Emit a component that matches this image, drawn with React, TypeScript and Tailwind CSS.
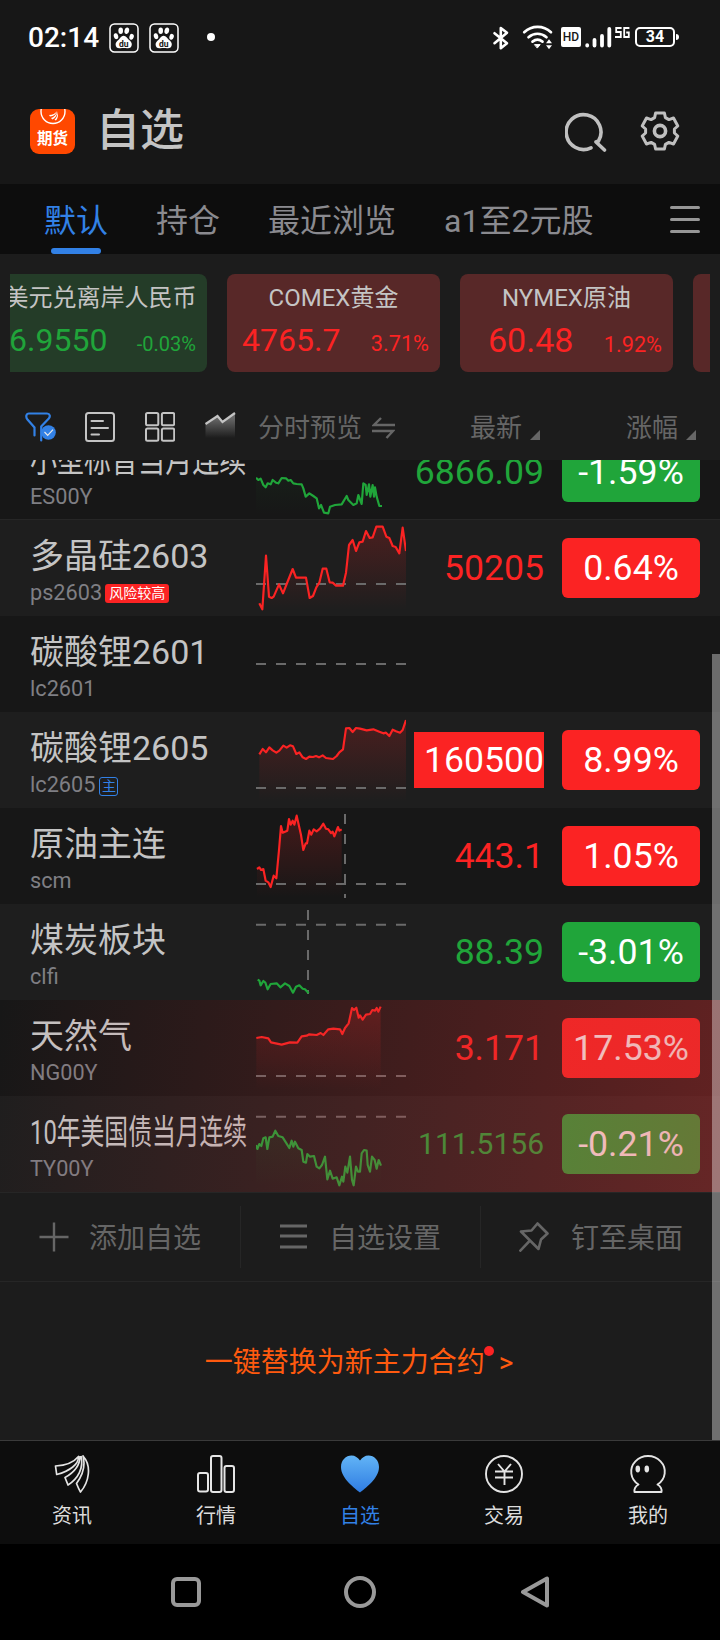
import React from 'react';

interface Quote {
    name: string;
    nameClass?: string;
    code: string;
    tag?: 'risk' | 'main';
    price?: string;
    priceClass?: string;
    change?: string;
    up?: boolean;
    flash?: boolean;
    points?: string;
    baseline: number;
    now?: number;
}

interface IndexCard {
    name: string;
    price: string;
    priceClass: string;
    change: string;
    changeClass: string;
    up: boolean;
}

const tabs = ['默认', '持仓', '最近浏览', 'a1至2元股'];

const indexCards: IndexCard[] = [
    { name: '美元兑离岸人民币', price: '6.9550', priceClass: 'pl-[15px] text-[32px]', change: '-0.03%', changeClass: 'text-[20px]', up: false },
    { name: 'COMEX黄金', price: '4765.7', priceClass: 'pl-[15px] text-[32px]', change: '3.71%', changeClass: 'text-[21.7px]', up: true },
    { name: 'NYMEX原油', price: '60.48', priceClass: 'pl-[28px] text-[34px]', change: '1.92%', changeClass: 'text-[21.7px]', up: true },
    { name: '', price: '', priceClass: '', change: '', changeClass: '', up: true },
];

// Chart points use a 450x288 grid, three units for each pixel of a row.
const quotes: Quote[] = [
    {
        name: '小型标普当月连续', nameClass: 'scale-x-[0.795]', code: 'ES00Y', price: '6866.09', change: '-1.59%', up: false, baseline: 62,
        points: '0,161 7,168 14,164 22,183 29,190 35,178 44,181 50,168 60,176 67,178 77,162 90,163 97,170 104,168 112,178 122,180 137,181 142,193 149,218 160,208 172,216 182,223 189,253 195,243 204,266 217,268 222,248 237,243 257,241 272,216 277,228 292,243 302,238 307,213 317,240 322,178 329,183 332,213 339,181 343,218 350,183 354,218 357,190 362,218 370,246 378,246',
    },
    {
        name: '多晶硅2603', code: 'ps2603', tag: 'risk', price: '50205', change: '0.64%', up: true, baseline: 192,
        points: '10,250 19,268 30,107 39,230 47,234 53,230 69,193 81,220 92,192 110,147 120,173 150,173 161,234 171,228 181,202 190,188 200,146 211,146 221,187 230,188 240,197 261,197 270,158 279,75 290,60 300,93 310,67 320,65 330,33 341,54 350,52 361,20 380,20 391,50 400,54 410,78 419,81 430,100 440,23 450,93',
    },
    { name: '碳酸锂2601', code: 'lc2601', baseline: 144 },
    {
        name: '碳酸锂2605', code: 'lc2605', tag: 'main', price: '160500', change: '8.99%', up: true, flash: true, baseline: 228,
        points: '10,127 20,111 30,121 40,106 50,115 61,122 70,116 82,101 92,107 102,100 111,103 121,126 130,121 140,136 150,141 160,134 171,135 180,132 189,136 200,130 210,138 231,141 242,132 250,121 261,112 270,49 280,48 290,60 300,48 312,50 332,55 352,52 370,59 382,64 390,62 400,72 410,53 420,58 432,62 440,54 450,24',
    },
    {
        name: '原油主连', code: 'scm', price: '443.1', change: '1.05%', up: true, baseline: 228, now: 267,
        points: '3,183 10,178 15,186 22,183 29,218 37,223 44,237 53,203 61,211 69,126 75,54 80,74 94,68 99,33 104,50 110,38 115,50 122,23 129,54 135,81 142,126 149,106 153,106 160,68 166,80 173,64 182,70 192,62 202,47 210,62 217,64 225,75 230,71 235,85 246,57 250,68 257,64',
    },
    {
        name: '煤炭板块', code: 'clfi', price: '88.39', change: '-3.01%', up: false, baseline: 62, now: 156,
        points: '5,227 10,230 14,244 22,231 28,236 35,256 44,240 62,238 73,250 87,238 100,246 111,266 120,248 130,244 140,254 147,256 158,268',
    },
    {
        name: '天然气', code: 'NG00Y', price: '3.171', change: '17.53%', up: true, baseline: 228,
        points: '1,114 17,111 37,115 45,127 77,134 102,127 124,128 137,109 152,107 160,103 182,105 194,99 202,105 217,88 232,86 252,88 259,102 267,84 278,70 288,24 294,30 301,23 308,53 312,46 320,59 330,44 342,42 349,30 357,32 362,24 367,35 374,20',
    },
    {
        name: '10年美国债当月连续', nameClass: 'scale-x-[0.7]', code: 'TY00Y', price: '111.5156', priceClass: 'text-[30px]', change: '-0.21%', up: false, baseline: 62,
        points: '0,147 4,159 10,144 16,150 22,127 29,124 34,159 40,124 50,122 58,104 67,120 80,124 90,140 100,156 107,134 112,152 117,137 127,157 137,162 142,197 150,200 154,174 162,182 174,180 182,212 190,217 198,207 207,182 214,250 222,224 230,248 242,244 250,268 258,242 262,257 268,212 274,230 282,182 288,252 293,268 300,212 306,227 312,227 317,172 324,162 332,164 335,207 342,227 348,182 356,192 362,218 368,192 375,209',
    },
];

const BaiduIcon = () => (
    <svg className="h-[30px] w-[30px]" viewBox="0 0 30 30">
        <rect x="1" y="1" width="28" height="28" rx="4.5" fill="none" stroke="#fff" strokeWidth="1.5" />
        <g fill="#fff">
            <ellipse cx="11.7" cy="7.8" rx="2.3" ry="3.3" />
            <ellipse cx="17.8" cy="7.8" rx="2.3" ry="3.3" transform="rotate(12 17.8 7.8)" />
            <ellipse cx="7" cy="13.2" rx="2.2" ry="3" transform="rotate(-15 7 13.2)" />
            <ellipse cx="22.6" cy="13.8" rx="2.2" ry="3" transform="rotate(15 22.6 13.8)" />
            <path d="M14.6 12.8c2.6 0 3.6 2.4 5.2 4 1.8 1.6 3.2 2.6 3 5-.2 3-2.6 3.8-4.8 3.4-2.2-.4-4.4-.4-6.6 0-2.4.4-4.6-.4-4.8-3.4-.2-2.4 1.4-3.4 3-5 1.600-1.600 2.400-4 5-4z" />
        </g>
        <text x="14.7" y="23.6" fontSize="8.5" fontWeight="700" textAnchor="middle" fill="#171717" fontFamily="Roboto, sans-serif">du</text>
    </svg>
);

const StatusBar = () => (
    <div className="flex h-[76px] items-center pl-7 pr-[41px] text-white">
        <span className="w-[72px] text-[28px] font-medium leading-none">02:14</span>
        <div className="ml-[9px] flex items-center gap-[10px]">
            <BaiduIcon />
            <BaiduIcon />
        </div>
        <span className="-mt-[2px] ml-[28px] h-2 w-2 rounded-full bg-white" />
        <div className="ml-auto flex items-center">
            <svg className="h-[26px] w-[18px]" viewBox="0 0 18 26" fill="none" stroke="#fff" strokeWidth="2.6" strokeLinejoin="round" strokeLinecap="round">
                <path d="M2.5 8.2l12.500 10-6.200 5V3l6.200 4.800-12.500 10.400" />
            </svg>
            <svg className="-mt-[2px] ml-[12px] h-6 w-[31px]" viewBox="0 0 31 24" fill="none" stroke="#fff" strokeWidth="2.7" strokeLinecap="round">
                <path d="M2.2 7.2c7.800-7.200 19-7.200 26.800 0M6.500 12.200c5.400-4.600 12.600-4.600 18 0M10.500 16.600c3.200-2.400 6.800-2.400 10 0" />
                <path d="M12.8 19.600h5.400l-2.700 3.200z" fill="#fff" strokeWidth="1" />
                <path d="M24 18.200l3-4 3 4zM24 20.200l3 4 3-4z" fill="#fff" stroke="none" />
            </svg>
            <span className="-mt-[2px] ml-2 flex h-5 w-5 items-center justify-center rounded-[2px] bg-white text-[12px] font-medium leading-none text-[#171717]">HD</span>
            <svg className="ml-1 h-[22px] w-[27px]" viewBox="0 0 27 22" fill="none" stroke="#fff" strokeWidth="3.8" strokeLinecap="round">
                <path d="M2.2 18.200v.4M9.500 13v5.600M17 9v9.600M24.300 2v16.600" />
            </svg>
            <svg className="mb-[11px] ml-[3px] h-[11px] w-[15px]" viewBox="0 0 15 11" fill="none" stroke="#fff" strokeWidth="1.8">
                <path d="M6.6 1H1.200v4h4.600v5H0M14.400 1H9.200v9h4.600V5.500h-2.600" />
            </svg>
            <span className="-mt-[2px] ml-[5px] flex h-5 w-[40px] items-center justify-center rounded-[5px] border-2 border-white text-[16px] font-bold leading-none">34</span>
            <span className="-mt-[2px] ml-[1px] h-[6px] w-[3px] rounded-r-full bg-white" />
        </div>
    </div>
);

const Header = () => (
    <div className="flex h-[108px] items-start pl-[30px] pr-10">
        <div className="mt-[33px] flex h-[45px] w-[45px] flex-col items-center overflow-hidden rounded-[9px] bg-[#ff4800]">
            <svg className="h-[19px] w-[30px] shrink-0" viewBox="0 0 30 19" fill="none">
                <circle cx="15" cy="2.5" r="12" stroke="#fff" strokeWidth="1.4" />
                <path d="M11 6c4 0 6-1.500 8-4-1 3-3 5-7 5.600zM13 9c3-.6 5-3 6.200-6.500 0 4-2 6.500-4.800 8zM16.500 10.800c2-1.800 3-4.500 3-8 1 4 .4 6.500-1.500 8.700z" fill="#fff" />
            </svg>
            <span className="text-[15.5px] font-bold leading-[23px] text-white">期货</span>
        </div>
        <h1 className="ml-[21px] mt-[23px] text-[44px] font-medium leading-[64px] text-[#c4c4c4]">自选</h1>
        <svg className="ml-auto mt-[35px] h-[42px] w-[42px]" viewBox="0 0 42 42" fill="none" stroke="#c0c0c0" strokeWidth="3.6" strokeLinecap="round">
            <path d="M26 36.800A17.400 17.400 0 1 1 33.500 30L31 31L39.500 39" strokeLinejoin="round" />
        </svg>
        <svg className="ml-[33px] mt-[35px] h-10 w-10" viewBox="0 0 40 40" fill="none" stroke="#c0c0c0" strokeWidth="3" strokeLinejoin="round">
            <path d="M15.600 2L24.400 2L25.400 6.600L28.900 8.600L33.500 7L37.800 15L34.400 18L34.400 22L37.800 25L33.500 33L28.900 31.400L25.400 33.400L24.400 38L15.600 38L14.600 33.400L11.100 31.400L6.500 33L2.200 25L5.600 22L5.600 18L2.200 15L6.500 7L11.100 8.600L14.600 6.600Z" />
            <circle cx="20" cy="20" r="5.6" strokeWidth="3.6" />
        </svg>
    </div>
);

const TabBar = () => (
    <div className="flex h-[70px] items-stretch gap-12 bg-[#0d0d0d] pl-11 pr-5 text-[32px]">
        {tabs.map((tab, i) => (
            <div key={tab} className={i === 0 ? 'flex flex-col items-center text-[#3281e6]' : 'flex flex-col items-center text-[#8a8a8f]'}>
                <span className="h-16 whitespace-nowrap leading-[75px]">{tab}</span>
                {i === 0 && <span className="h-[6px] w-[50px] rounded-[3px] bg-[#3281e6]" />}
            </div>
        ))}
        <div className="ml-auto flex flex-col justify-center gap-[9px]">
            <span className="h-[3px] w-[30px] rounded bg-[#969696]" />
            <span className="h-[3px] w-[30px] rounded bg-[#969696]" />
            <span className="h-[3px] w-[30px] rounded bg-[#969696]" />
        </div>
    </div>
);

const IndexStrip = () => (
    <div className="h-[138px] px-[10px] pt-5">
        <div className="flex gap-5 overflow-hidden">
            {indexCards.map((card, i) => (
                <div key={i} className={`${i === 0 ? '-ml-4' : ''} ${card.up ? 'bg-[#582828]' : 'bg-[#243c28]'} h-[98px] w-[213px] shrink-0 rounded-lg`}>
                    <p className="mt-[5px] h-[38px] text-center text-[24px] leading-[38px] whitespace-nowrap text-[#c4c4c4]">{card.name}</p>
                    <div className={`${card.up ? 'text-[#fb2323]' : 'text-[#20a53a]'} flex items-baseline justify-between pr-[11px] leading-[46px]`}>
                        <span className={card.priceClass}>{card.price}</span>
                        <span className={card.changeClass}>{card.change}</span>
                    </div>
                </div>
            ))}
        </div>
    </div>
);

const SortMark = () => (
    <svg className="h-[10px] w-[10px]" viewBox="0 0 10 10">
        <path d="M10 0v10H0z" fill="#666" />
    </svg>
);

const Toolbar = () => (
    <div className="flex h-[68px] items-center pt-[2px] pl-[25px] pr-6 text-[26px] text-[#666]">
        <svg className="h-[30px] w-8" viewBox="0 0 32 30" fill="none">
            <path d="M9.5 23.500V15.500L2.500 7.500C0.500 5 1 1.500 4 1.500h18c3 0 3.500 3 1.800 5L16.200 14.500v14" stroke="#3281e6" strokeWidth="2.2" strokeLinecap="round" />
            <circle cx="23.5" cy="20.5" r="7.3" fill="#3281e6" />
            <path d="M19.5 20l3.200 3.400 5.300-5.800" stroke="#e8e8e8" strokeWidth="1.2" />
        </svg>
        <svg className="ml-[28px] h-[30px] w-[30px]" viewBox="0 0 30 30" fill="none" stroke="#c4c4c4" strokeWidth="2" strokeLinecap="round">
            <rect x="1" y="1" width="28" height="28" rx="2.5" />
            <path d="M6.5 9h11.500M6.500 16h16.500M6.500 22.500h7.500" />
        </svg>
        <svg className="ml-[30px] h-[30px] w-[30px]" viewBox="0 0 30 30" fill="none" stroke="#c4c4c4" strokeWidth="2">
            <rect x="1" y="1" width="12.3" height="12.3" rx="1.5" />
            <rect x="16.9" y="1" width="12.3" height="12.3" rx="1.5" />
            <rect x="1" y="16.5" width="12.3" height="12.3" rx="1.5" />
            <rect x="16.9" y="16.5" width="12.3" height="12.3" rx="1.5" />
        </svg>
        <svg className="ml-[30px] h-[30px] w-[31px]" viewBox="0 0 31 30" fill="none">
            <defs>
                <linearGradient id="trend" x1="0" y1="0" x2="0" y2="1">
                    <stop offset="0.2" stopColor="#888" stopOpacity="0.7" />
                    <stop offset="1" stopColor="#888" stopOpacity="0" />
                </linearGradient>
            </defs>
            <path d="M0.5 12L12.500 4l5 6L30 1v25H0.500z" fill="url(#trend)" />
            <path d="M0.5 12L12.500 4l5 6L30 1" stroke="#c4c4c4" strokeWidth="2.2" />
        </svg>
        <span className="mt-[3px] ml-[22px]">分时预览</span>
        <svg className="mt-[2px] ml-[10px] h-[22px] w-[23px]" viewBox="0 0 23 22" fill="none" stroke="#666" strokeWidth="2.4">
            <path d="M9 1L2 8h21M0 14h21l-6.500 7" />
        </svg>
        <span className="mt-[3px] ml-[75px]">最新</span>
        <div className="ml-2 mt-[15px]"><SortMark /></div>
        <span className="mt-[3px] ml-auto">涨幅</span>
        <div className="ml-2 mt-[15px]"><SortMark /></div>
    </div>
);

const Sparkline: React.FC<{ quote: Quote }> = ({ quote }) => {
    const { points, baseline, now, up, code } = quote;
    const pairs = points ? points.split(' ') : [];
    const first = points ? pairs[0].split(',')[0] : '0';
    const last = points ? pairs[pairs.length - 1].split(',')[0] : '0';
    const color = up ? '#fb2323' : '#20a53a';

    return (
        <svg className="h-24 w-[150px] shrink-0" viewBox="0 0 450 288" fill="none">
            <defs>
                <linearGradient id={`fill-${code}`} gradientUnits="userSpaceOnUse" x1="0" y1="20" x2="0" y2="270">
                    <stop offset="0" stopColor={color} stopOpacity={up ? 0.2 : 0.12} />
                    <stop offset="1" stopColor={color} stopOpacity="0" />
                </linearGradient>
            </defs>
            {points && <polygon points={`${first},270 ${points} ${last},270`} fill={`url(#fill-${code})`} />}
            <path d={`M0 ${baseline}H450`} stroke="#6a6a6a" strokeWidth="6" strokeDasharray="30 30" />
            {now && <path d={`M${now} 18V270`} stroke="#6a6a6a" strokeWidth="6" strokeDasharray="30 30" />}
            {points && <polyline points={points} stroke={color} strokeWidth="6.5" strokeLinejoin="round" />}
        </svg>
    );
};

const QuoteRow: React.FC<{ quote: Quote; index: number }> = ({ quote, index }) => {
    const priceColor = quote.flash ? 'bg-[#fb2323] text-white' : quote.up ? 'text-[#fb2323]' : 'text-[#20a53a]';

    return (
        <div className={`${index % 2 === 1 ? 'bg-[#1e1e1e]' : 'bg-[#171717]'} ${index === 0 ? 'border-b border-[#262626]' : ''} flex h-24 items-center pl-[30px] pr-5`}>
            <div className="h-24 w-[226px] pt-[11px]">
                <p className={`${quote.nameClass ?? ''} h-[50px] origin-left text-[34px] leading-[50px] whitespace-nowrap text-[#c4c4c4]`}>{quote.name}</p>
                <div className="flex h-6 items-center text-[21.7px] leading-6 text-[#7f7f84]">
                    {quote.code}
                    {quote.tag === 'risk' && <span className="ml-[3px] h-[19px] rounded-[3px] bg-[#fb2323] px-1 text-[14px] leading-[19px] text-white">风险较高</span>}
                    {quote.tag === 'main' && <span className="mt-[2px] ml-1 flex h-[19px] w-[19px] items-center justify-center rounded-[3px] border border-[#3281e6] text-[14px] leading-none text-[#3281e6]">主</span>}
                </div>
            </div>
            <Sparkline quote={quote} />
            {quote.price && (
                <>
                    <div className={`${priceColor} ${quote.priceClass ?? 'text-[35.6px]'} ml-2 h-14 w-[130px] text-right leading-[56px]`}>{quote.price}</div>
                    <div className={`${quote.up ? 'bg-[#fb2323]' : 'bg-[#20a53a]'} ml-[18px] h-[60px] w-[138px] rounded-md text-center text-[35.7px] leading-[60px] text-white`}>{quote.change}</div>
                </>
            )}
        </div>
    );
};

const Actions = () => (
    <div className="flex h-[90px] items-center border-y border-[#262626] text-[28px] text-[#666]">
        <div className="flex h-[62px] w-[241px] items-center gap-5 border-r border-[#262626] pl-[39px]">
            <svg className="h-[30px] w-[30px]" viewBox="0 0 30 30" stroke="#666" strokeWidth="2.4">
                <path d="M15 0.500v29M0.500 15h29" />
            </svg>
            <span className="mt-[3px]">添加自选</span>
        </div>
        <div className="flex h-[62px] w-[240px] items-center gap-5 border-r border-[#262626] pl-[38px]">
            <svg className="h-[30px] w-[30px]" viewBox="0 0 30 30" stroke="#666" strokeWidth="2.8">
                <path d="M1 4h27M1 14h27M1 25h27" />
            </svg>
            <span className="mt-[3px]">自选设置</span>
        </div>
        <div className="flex h-[62px] w-[239px] items-center gap-[22px] pl-[38px]">
            <svg className="h-[30px] w-[30px]" viewBox="0 0 30 30" fill="none" stroke="#666" strokeWidth="2.6" strokeLinejoin="round">
                <path d="M18.500 1.500L28.500 11.500L22 17.500L19.500 27L2 9.500L12.500 8.500ZM11 18.500L0.500 29.500" />
            </svg>
            <span className="mt-[3px]">钉至桌面</span>
        </div>
    </div>
);

const navItems = [
    {
        label: '资讯',
        icon: (
            <g stroke="#e4e4e4" strokeWidth="1.7" strokeLinejoin="round">
                <path d="M2.5 11C13 10.500 21 7 25.500 1.500C26 9 17 16 3.700 19.500Z" />
                <path d="M27 1C27 9 22 17 12 22.500L15 30C25 23.500 31 13 28 1" />
                <path d="M30 1C33 12 29 21 23.500 28.500C24.500 31 26 34.500 27.500 37C36 27 39 11 30 1Z" />
            </g>
        ),
    },
    {
        label: '行情',
        icon: (
            <g stroke="#e4e4e4" strokeWidth="2">
                <rect x="1" y="18" width="10" height="18.5" rx="2" />
                <rect x="14" y="1" width="10.5" height="36" rx="2" />
                <rect x="27.5" y="11" width="9.5" height="26" rx="2" />
            </g>
        ),
    },
    {
        label: '自选',
        icon: (
            <>
                <defs>
                    <linearGradient id="heart" x1="0" y1="0" x2="0" y2="1">
                        <stop offset="0" stopColor="#62b4f6" />
                        <stop offset="1" stopColor="#2f7ce2" />
                    </linearGradient>
                </defs>
                <path d="M19 37.500C15 34 0 24 0 12C0 5 5 0.500 10.500 0.500C14 0.500 17 2.500 19 5.500C21 2.500 24 0.500 27.500 0.500C33 0.500 38 5 38 12C38 24 23 34 19 37.500Z" fill="url(#heart)" />
            </>
        ),
    },
    {
        label: '交易',
        icon: (
            <g stroke="#e4e4e4" strokeWidth="1.9">
                <circle cx="19" cy="19" r="18" />
                <path d="M13 9l6.500 7.500L26 9M10 16.500h18M10 22.500h18M19.500 16.500v13.500" />
            </g>
        ),
    },
    {
        label: '我的',
        icon: (
            <>
                <path d="M9.500 29.500A16.800 15.600 0 1 1 28.500 29.500C31 31 33 34 32.500 37H5.500C5 34 7 31 9.500 29.500Z" stroke="#e4e4e4" strokeWidth="1.9" strokeLinejoin="round" />
                <ellipse cx="8.8" cy="14" rx="2.3" ry="3.4" fill="#e4e4e4" />
                <ellipse cx="17.8" cy="14" rx="2.3" ry="3.4" fill="#e4e4e4" />
            </>
        ),
    },
];

const BottomNav = () => (
    <div className="grid h-[104px] grid-cols-5 border-t border-[#3a3a3a] bg-[#0d0d0d]">
        {navItems.map((item, i) => (
            <div key={item.label} className="flex flex-col items-center pt-[14px]">
                <svg className="h-[38px] w-[38px]" viewBox="0 0 38 38" fill="none">{item.icon}</svg>
                <span className={`${i === 2 ? 'text-[#3281e6]' : 'text-[#dcdcdc]'} mt-2 text-[20px] leading-[30px]`}>{item.label}</span>
            </div>
        ))}
    </div>
);

const SystemNav = () => (
    <div className="flex h-24 items-center justify-center gap-[143px] bg-black">
        <span className="h-[30px] w-[30px] rounded-md border-4 border-[#999]" />
        <span className="h-8 w-8 rounded-full border-4 border-[#999]" />
        <svg className="h-8 w-[30px]" viewBox="0 0 30 32" fill="none" stroke="#999" strokeWidth="4" strokeLinejoin="round">
            <path d="M28 2.500v27L4 16z" />
        </svg>
    </div>
);

export default function App() {
    return (
        <div className="flex h-[1640px] w-[720px] flex-col overflow-hidden bg-[#1c1c1c] font-[Roboto,'Noto_Sans_CJK_SC',sans-serif]">
            <div className="bg-[#171717]">
                <StatusBar />
                <Header />
            </div>
            <TabBar />
            <IndexStrip />
            <Toolbar />
            <div className="relative h-[980px] overflow-hidden">
                <div className="-mt-9">
                    {quotes.slice(0, 6).map((quote, i) => <QuoteRow key={quote.code} quote={quote} index={i} />)}
                    <div className="relative">
                        {quotes.slice(6).map((quote, i) => <QuoteRow key={quote.code} quote={quote} index={i + 6} />)}
                        <div className="absolute inset-0 bg-[linear-gradient(98deg,rgba(211,50,50,0)_0%,rgba(211,50,50,0.4)_100%)]" />
                    </div>
                    <Actions />
                    <div className="flex h-[158px] items-center justify-center pt-1 pr-[2px] text-[28px] text-[#ff5a0f]">
                        <span className="relative">
                            一键替换为新主力合约
                            <span className="absolute top-[4px] -right-[9px] h-[10px] w-[10px] rounded-full bg-[#fb2323]" />
                        </span>
                        <span className="ml-[14px]">&gt;</span>
                    </div>
                </div>
                <div className="absolute top-[194px] right-0 h-[786px] w-2 bg-white/37" />
            </div>
            <BottomNav />
            <SystemNav />
        </div>
    );
}
